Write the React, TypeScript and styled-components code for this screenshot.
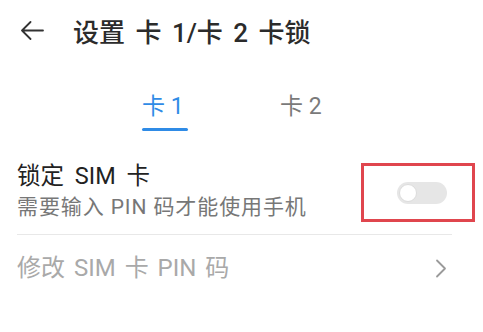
import React from "react";
import styled, { createGlobalStyle } from "styled-components";

const Global = createGlobalStyle`
  html, body {
    margin: 0;
    padding: 0;
    background: #ffffff;
  }
  body {
    font-family: Roboto, "Noto Sans CJK SC", sans-serif;
  }
`;

const App = () => {
  return (
    <Page>
      <Global />
      <Header>
        <Back>
          <svg width="24" height="19" viewBox="0 0 24 19" fill="none">
            <path d="M23 9.5H2M10.5 1L2 9.5L10.5 18" stroke="#333" strokeWidth="1.8" strokeLinecap="round" strokeLinejoin="round" />
          </svg>
        </Back>
        <Title>设置 卡 1/卡 2 卡锁</Title>
      </Header>

      <Tabs>
        <Tab active>卡 1</Tab>
        <Tab>卡 2</Tab>
      </Tabs>

      <List>
        <Row>
          <RowText>
            <RowTitle>锁定 SIM 卡</RowTitle>
            <RowSub>需要输入 PIN 码才能使用手机</RowSub>
          </RowText>
          <Highlight>
            <Switch>
              <Knob />
            </Switch>
          </Highlight>
        </Row>
        <Divider />
        <LinkRow>
          <LinkTitle>修改 SIM 卡 PIN 码</LinkTitle>
          <Chevron>
            <svg width="12" height="19" viewBox="0 0 12 19" fill="none">
              <path d="M2 1.5L10 9.5L2 17.5" stroke="#9a9a9a" strokeWidth="1.8" strokeLinecap="round" strokeLinejoin="round" />
            </svg>
          </Chevron>
        </LinkRow>
      </List>
    </Page>
  );
};

export default App;

const Page = styled.div`
  width: 483px;
  height: 332px;
  background: #ffffff;
  overflow: hidden;
`;

const Header = styled.div`
  display: flex;
  align-items: center;
  height: 60px;
  padding-left: 20px;
`;

const Back = styled.div`
  display: flex;
  align-items: center;
  width: 53px;
`;

const Title = styled.div`
  font-size: 26px;
  font-weight: 500;
  color: #2b2b2b;
  word-spacing: 4px;
`;

const Tabs = styled.div`
  display: flex;
  gap: 92px;
  padding-left: 142px;
  margin-top: 31px;
  height: 46px;
`;

const Tab = styled.div<{ active?: boolean }>`
  position: relative;
  font-size: 23px;
  color: ${(p) => (p.active ? "#2f8be6" : "#7a7a7a")};
  line-height: 32px;
  width: 46px;

  &::after {
    content: "";
    display: ${(p) => (p.active ? "block" : "none")};
    position: absolute;
    left: 0;
    right: 0;
    top: 37px;
    height: 3px;
    border-radius: 2px;
    background: #2f8be6;
  }
`;

const List = styled.div`
  padding: 0 31px 0 17px;
  margin-top: 18px;
`;

const Row = styled.div`
  display: flex;
  align-items: center;
  justify-content: space-between;
  height: 75px;
`;

const RowText = styled.div`
  display: flex;
  flex-direction: column;
  gap: 6px;
  margin-top: -4px;
`;

const RowTitle = styled.div`
  font-size: 23.5px;
  line-height: 26px;
  word-spacing: 5px;
  color: #222222;
`;

const RowSub = styled.div`
  font-size: 21px;
  line-height: 24px;
  letter-spacing: 0.9px;
  color: #777777;
`;

const Highlight = styled.div`
  width: 100px;
  height: 53px;
  border: 3px solid #e0464e;
  display: flex;
  align-items: center;
  justify-content: center;
  padding-left: 8px;
  box-sizing: content-box;
  margin-right: -23px;
`;

const Switch = styled.div`
  width: 50px;
  height: 22px;
  border-radius: 11px;
  background: #e6e6e6;
  display: flex;
  align-items: center;
  padding: 0 2px;
  box-sizing: border-box;
`;

const Knob = styled.div`
  width: 18px;
  height: 18px;
  border-radius: 50%;
  background: #ffffff;
  border: 1.5px solid #dcdcdc;
  box-sizing: border-box;
`;

const Divider = styled.div`
  height: 1px;
  background: #e8e8e8;
  margin-top: 4px;
`;

const LinkRow = styled.div`
  display: flex;
  align-items: center;
  justify-content: space-between;
  height: 66px;
`;

const LinkTitle = styled.div`
  font-size: 24px;
  line-height: 30px;
  word-spacing: 3px;
  color: #a9a9a9;
`;

const Chevron = styled.div`
  display: flex;
  align-items: center;
  padding-right: 5px;
`;
